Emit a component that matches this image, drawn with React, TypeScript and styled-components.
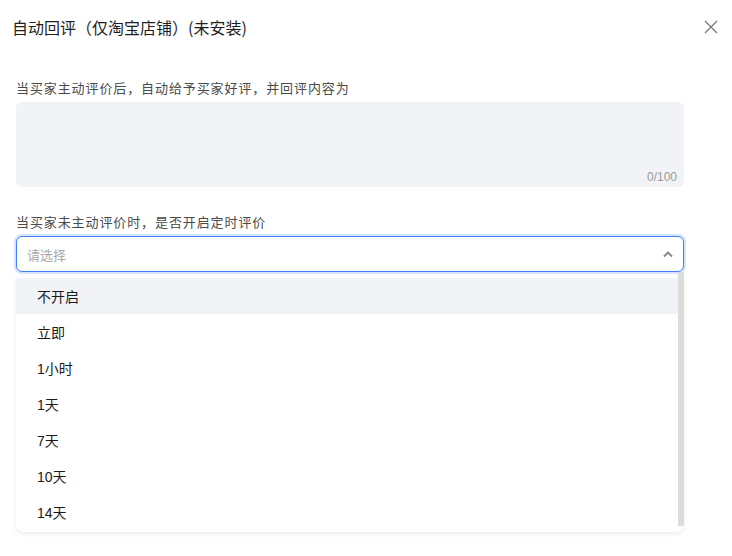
import React, { useState } from "react";
import styled, { createGlobalStyle } from "styled-components";

const GlobalStyle = createGlobalStyle`
  html, body {
    margin: 0;
    padding: 0;
    background: #fff;
    font-family: "Noto Sans CJK SC", "Liberation Sans", sans-serif;
  }
`;

const Panel = styled.div`
  width: 732px;
  height: 556px;
  box-sizing: border-box;
  padding: 14px 12px 0 16px;
  overflow: hidden;
`;

const Header = styled.div`
  display: flex;
  align-items: center;
  justify-content: space-between;
  height: 26px;
  margin-left: -4px;
`;

const Title = styled.div`
  font-size: 16px;
  color: #1f1f1f;
`;

const CloseButton = styled.button`
  border: none;
  background: none;
  padding: 0;
  width: 14px;
  height: 14px;
  margin-right: 2px;
  display: flex;
  cursor: pointer;
`;

const Form = styled.div`
  width: 668px;
  margin-top: 39px;
  display: flex;
  flex-direction: column;
`;

const Label = styled.div`
  font-size: 13px;
  letter-spacing: 0.9px;
  color: #4a4a4a;
  line-height: 18px;
  margin-bottom: 5px;
`;

const TextArea = styled.div`
  position: relative;
  height: 85px;
  background: #f2f3f7;
  border-radius: 6px;
  margin-bottom: 26px;
`;

const Counter = styled.span`
  position: absolute;
  right: 7px;
  bottom: 3px;
  font-size: 12px;
  color: #9a9a9a;
  font-family: "Liberation Sans", sans-serif;
`;

const SelectWrap = styled.div`
  position: relative;
`;

const SelectBox = styled.div`
  height: 34px;
  border: 1px solid #3f7ef6;
  box-shadow: 0 0 0 2px #d6e4fd;
  border-radius: 6px;
  display: flex;
  align-items: center;
  justify-content: space-between;
  padding: 0 10px 0 10px;
`;

const Placeholder = styled.span`
  font-size: 13px;
  color: #a8a8a8;
`;

const Menu = styled.div`
  position: absolute;
  top: 40px;
  left: 0;
  right: 0;
  height: 256px;
  background: #fff;
  border-radius: 0 0 8px 8px;
  box-shadow: 0 2px 5px rgba(0, 0, 0, 0.08);
  display: flex;
`;

const Options = styled.div`
  flex: 1;
  padding-top: 2px;
`;

const Option = styled.div<{ $active?: boolean }>`
  height: 36px;
  display: flex;
  align-items: center;
  padding-left: 21px;
  font-size: 14px;
  color: #1a1a1a;
  background: ${(p) => (p.$active ? "#f2f3f7" : "transparent")};
  font-family: "Liberation Sans", "Noto Sans CJK SC", sans-serif;
`;

const Scrollbar = styled.div`
  width: 6px;
  margin-top: -4px;
  margin-bottom: 6px;
  background: #dcdcdc;
`;

const options = ["不开启", "立即", "1小时", "1天", "7天", "10天", "14天"];

export default function App() {
  const [active] = useState(0);
  return (
    <>
      <GlobalStyle />
      <Panel>
        <Header>
          <Title>自动回评（仅淘宝店铺）(未安装)</Title>
          <CloseButton aria-label="关闭">
            <svg width="14" height="14" viewBox="0 0 14 14">
              <path d="M1 1L13 13M13 1L1 13" stroke="#7a7a7a" strokeWidth="1.3" />
            </svg>
          </CloseButton>
        </Header>
        <Form>
          <Label>当买家主动评价后，自动给予买家好评，并回评内容为</Label>
          <TextArea>
            <Counter>0/100</Counter>
          </TextArea>
          <Label>当买家未主动评价时，是否开启定时评价</Label>
          <SelectWrap>
            <SelectBox>
              <Placeholder>请选择</Placeholder>
              <svg width="10" height="7" viewBox="0 0 10 7">
                <path d="M1 5.5L5 1.5L9 5.5" stroke="#8a8a8a" strokeWidth="2" fill="none" />
              </svg>
            </SelectBox>
            <Menu>
              <Options>
                {options.map((o, i) => (
                  <Option key={o} $active={i === active}>
                    {o}
                  </Option>
                ))}
              </Options>
              <Scrollbar />
            </Menu>
          </SelectWrap>
        </Form>
      </Panel>
    </>
  );
}
